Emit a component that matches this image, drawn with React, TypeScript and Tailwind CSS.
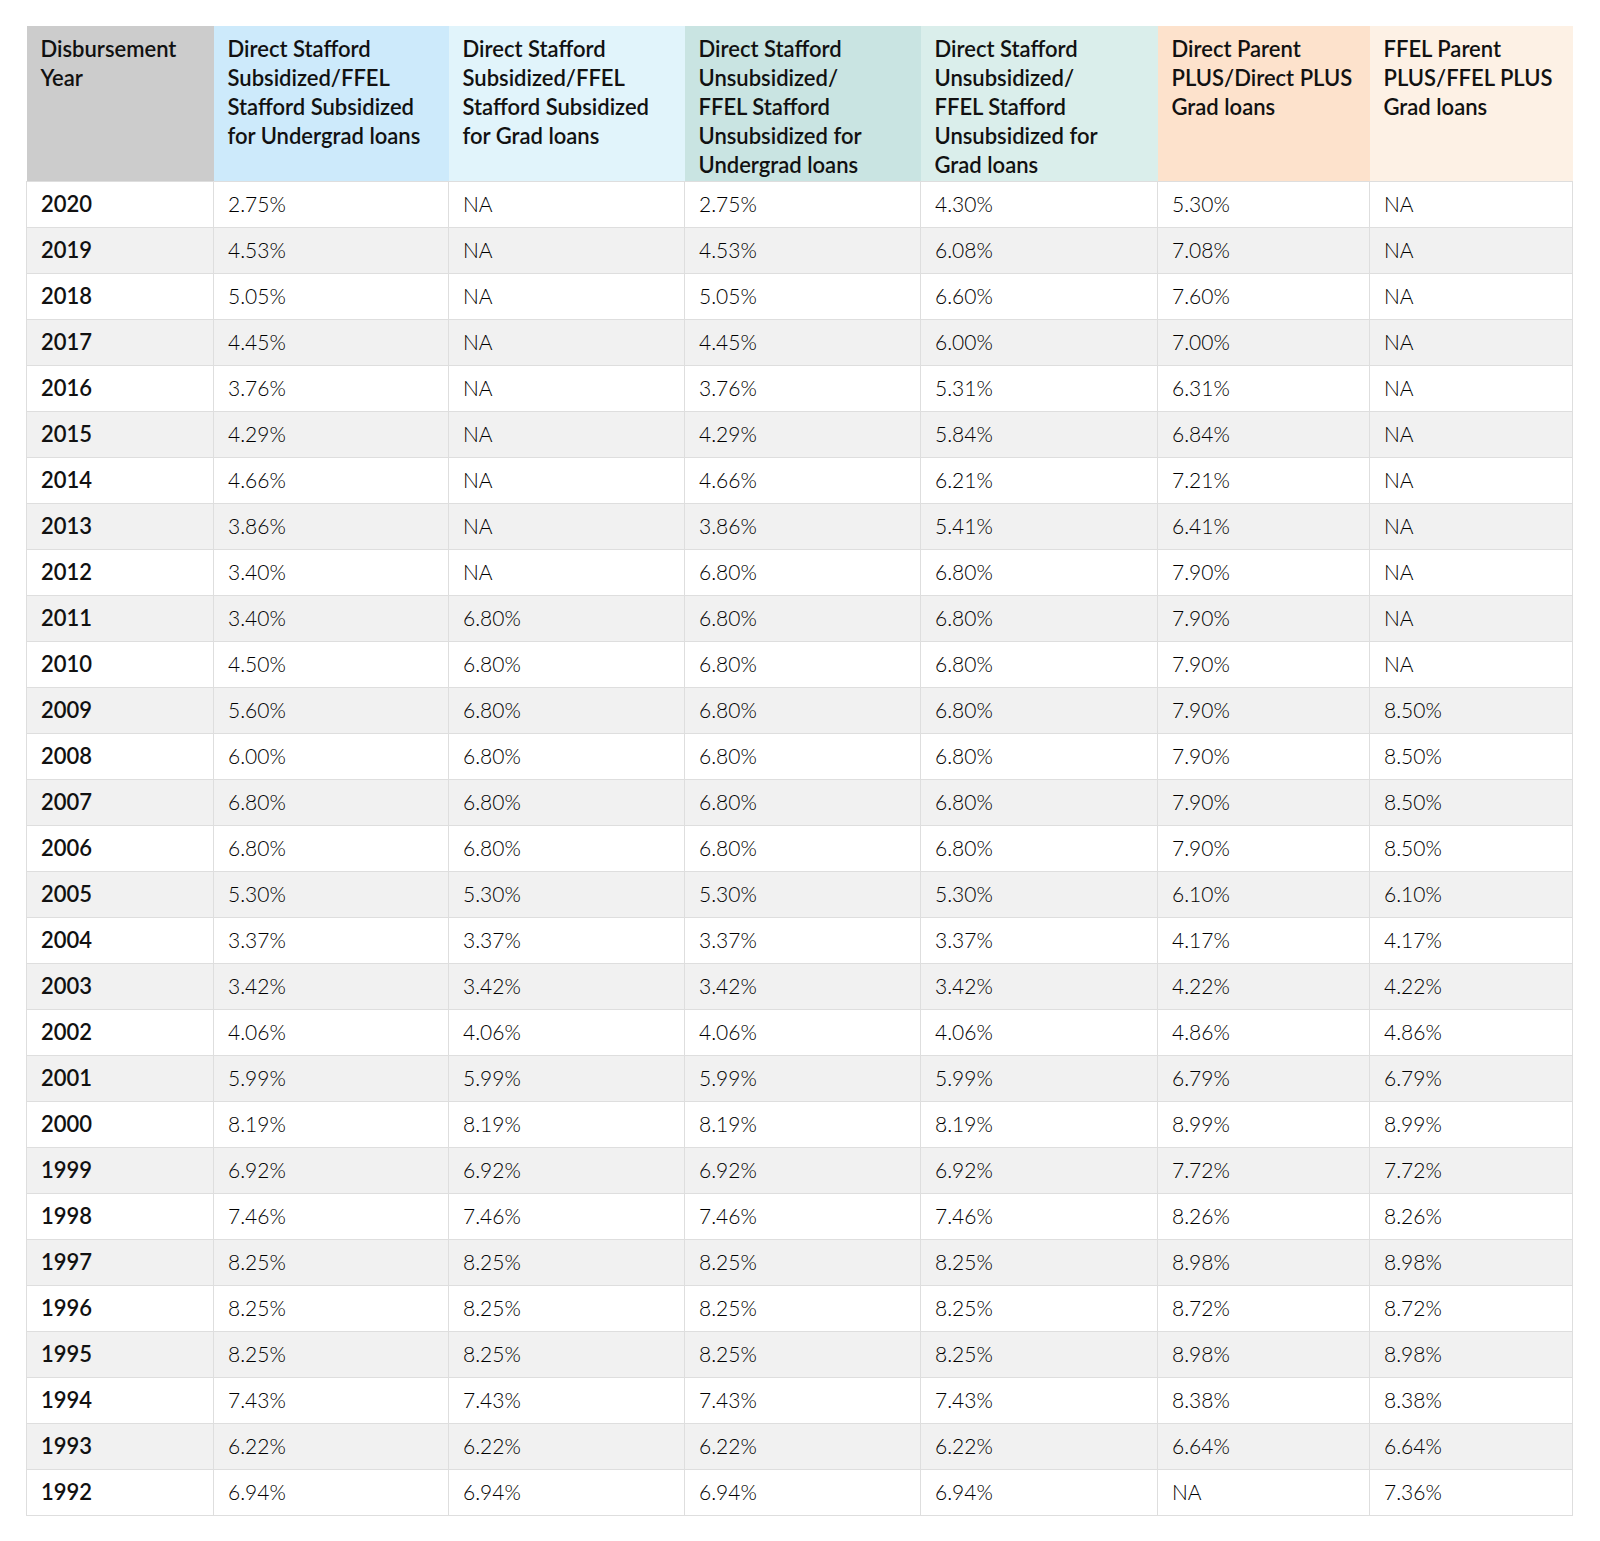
const headers = [
  { lines: ["Disbursement", "Year"], bg: "bg-[#cccccc]", w: "w-[187px]" },
  { lines: ["Direct Stafford", "Subsidized/FFEL", "Stafford Subsidized", "for Undergrad loans"], bg: "bg-[#cdeafb]", w: "w-[235px]" },
  { lines: ["Direct Stafford", "Subsidized/FFEL", "Stafford Subsidized", "for Grad loans"], bg: "bg-[#e1f4fb]", w: "w-[236px]" },
  { lines: ["Direct Stafford", "Unsubsidized/", "FFEL Stafford", "Unsubsidized for", "Undergrad loans"], bg: "bg-[#c9e4e2]", w: "w-[236px]" },
  { lines: ["Direct Stafford", "Unsubsidized/", "FFEL Stafford", "Unsubsidized for", "Grad loans"], bg: "bg-[#daeeeb]", w: "w-[237px]" },
  { lines: ["Direct Parent", "PLUS/Direct PLUS", "Grad loans"], bg: "bg-[#fde2cc]", w: "w-[212px]" },
  { lines: ["FFEL Parent", "PLUS/FFEL PLUS", "Grad loans"], bg: "bg-[#fdf1e5]", w: "w-[203px]" },
];

const rows: string[][] = [
  ["2020", "2.75%", "NA", "2.75%", "4.30%", "5.30%", "NA"],
  ["2019", "4.53%", "NA", "4.53%", "6.08%", "7.08%", "NA"],
  ["2018", "5.05%", "NA", "5.05%", "6.60%", "7.60%", "NA"],
  ["2017", "4.45%", "NA", "4.45%", "6.00%", "7.00%", "NA"],
  ["2016", "3.76%", "NA", "3.76%", "5.31%", "6.31%", "NA"],
  ["2015", "4.29%", "NA", "4.29%", "5.84%", "6.84%", "NA"],
  ["2014", "4.66%", "NA", "4.66%", "6.21%", "7.21%", "NA"],
  ["2013", "3.86%", "NA", "3.86%", "5.41%", "6.41%", "NA"],
  ["2012", "3.40%", "NA", "6.80%", "6.80%", "7.90%", "NA"],
  ["2011", "3.40%", "6.80%", "6.80%", "6.80%", "7.90%", "NA"],
  ["2010", "4.50%", "6.80%", "6.80%", "6.80%", "7.90%", "NA"],
  ["2009", "5.60%", "6.80%", "6.80%", "6.80%", "7.90%", "8.50%"],
  ["2008", "6.00%", "6.80%", "6.80%", "6.80%", "7.90%", "8.50%"],
  ["2007", "6.80%", "6.80%", "6.80%", "6.80%", "7.90%", "8.50%"],
  ["2006", "6.80%", "6.80%", "6.80%", "6.80%", "7.90%", "8.50%"],
  ["2005", "5.30%", "5.30%", "5.30%", "5.30%", "6.10%", "6.10%"],
  ["2004", "3.37%", "3.37%", "3.37%", "3.37%", "4.17%", "4.17%"],
  ["2003", "3.42%", "3.42%", "3.42%", "3.42%", "4.22%", "4.22%"],
  ["2002", "4.06%", "4.06%", "4.06%", "4.06%", "4.86%", "4.86%"],
  ["2001", "5.99%", "5.99%", "5.99%", "5.99%", "6.79%", "6.79%"],
  ["2000", "8.19%", "8.19%", "8.19%", "8.19%", "8.99%", "8.99%"],
  ["1999", "6.92%", "6.92%", "6.92%", "6.92%", "7.72%", "7.72%"],
  ["1998", "7.46%", "7.46%", "7.46%", "7.46%", "8.26%", "8.26%"],
  ["1997", "8.25%", "8.25%", "8.25%", "8.25%", "8.98%", "8.98%"],
  ["1996", "8.25%", "8.25%", "8.25%", "8.25%", "8.72%", "8.72%"],
  ["1995", "8.25%", "8.25%", "8.25%", "8.25%", "8.98%", "8.98%"],
  ["1994", "7.43%", "7.43%", "7.43%", "7.43%", "8.38%", "8.38%"],
  ["1993", "6.22%", "6.22%", "6.22%", "6.22%", "6.64%", "6.64%"],
  ["1992", "6.94%", "6.94%", "6.94%", "6.94%", "NA", "7.36%"],
];

export default function App() {
  return (
    <div className="min-h-[1541px] bg-white pl-[26px] pt-[26px] font-['Lato',sans-serif] text-[#111]">
      <table className="w-[1546px] table-fixed border-collapse">
        <thead>
          <tr>
            {headers.map((h) => (
              <th
                key={h.lines.join(" ")}
                className={`${h.bg} ${h.w} h-[155px] px-[14px] pt-[8px] align-top text-left text-[22px] leading-[29px] font-semibold`}
              >
                {h.lines.map((line) => (
                  <div key={line} className="whitespace-nowrap">
                    {line}
                  </div>
                ))}
              </th>
            ))}
          </tr>
        </thead>
        <tbody>
          {rows.map((row, i) => (
            <tr key={row[0]} className={i % 2 === 1 ? "bg-[#f1f1f1]" : "bg-white"}>
              {row.map((cell, j) => (
                <td
                  key={j}
                  className={`h-[46px] border border-[#dedede] px-[14px] leading-[28px] ${
                    j === 0 ? "text-[22px] font-semibold" : "text-[21px] font-light text-black"
                  }`}
                >
                  {cell}
                </td>
              ))}
            </tr>
          ))}
        </tbody>
      </table>
    </div>
  );
}
